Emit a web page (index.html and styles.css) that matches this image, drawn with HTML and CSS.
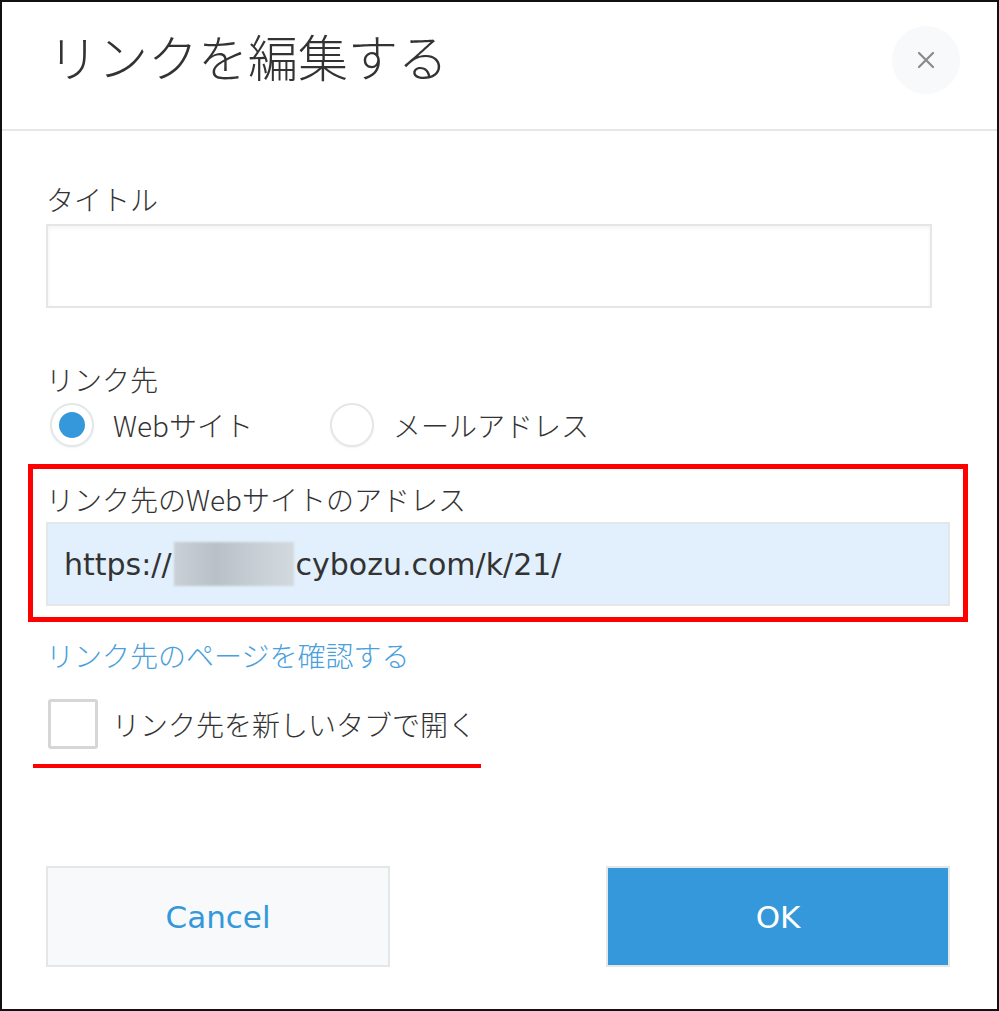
FILE: index.html
```html
<!DOCTYPE html>
<html lang="ja">
<head>
<meta charset="utf-8">
<link rel="stylesheet" href="styles.css">
</head>
<body>
<div class="frame">
  <header class="dialog-header">
    <h1 class="dialog-title">リンクを編集する</h1>
    <button class="close-btn" type="button">
      <svg width="20" height="20" viewBox="0 0 20 20"><path d="M3 3 L17 17 M17 3 L3 17" stroke="#8a8a8a" stroke-width="2.2" stroke-linecap="round"/></svg>
    </button>
  </header>
  <main class="dialog-body">
    <div class="label label-title">タイトル</div>
    <div class="text-input"></div>

    <div class="label label-dest">リンク先</div>
    <div class="radio-row">
      <div class="radio-item radio-item-first"><span class="radio checked"><span class="dot"></span></span><span class="radio-text">Webサイト</span></div>
      <div class="radio-item"><span class="radio"></span><span class="radio-text">メールアドレス</span></div>
    </div>

    <div class="highlight-box">
      <div class="label">リンク先のWebサイトのアドレス</div>
      <div class="url-input"><span>https://</span><span class="blur"></span><span>cybozu.com/k/21/</span></div>
    </div>

    <div class="link">リンク先のページを確認する</div>

    <div class="check-row"><span class="checkbox"></span><span class="check-text">リンク先を新しいタブで開く</span></div>
    <div class="red-underline"></div>

    <div class="buttons">
      <button class="btn btn-cancel" type="button">Cancel</button>
      <button class="btn btn-ok" type="button">OK</button>
    </div>
  </main>
</div>
</body>
</html>
```
FILE: styles.css
```css
* { box-sizing: border-box; }
html, body { margin: 0; padding: 0; background: #fff; }
body {
  font-family: "Noto Sans CJK JP", "Noto Sans", sans-serif;
  font-weight: 300;
  color: #333;
}
.frame {
  width: 999px;
  height: 1011px;
  border: 2px solid #111;
  background: #fff;
  overflow: hidden;
}
.dialog-header {
  box-sizing: content-box;
  height: 117px;
  padding: 2px 37px 8px 46px;
  border-bottom: 2px solid #e3e7e8;
  display: flex;
  align-items: center;
  justify-content: space-between;
}
.dialog-title {
  margin: 0 0 16px 0;
  font-weight: 300;
  font-size: 50px;
  line-height: 1;
  color: #333;
}
.close-btn {
  width: 68px;
  height: 68px;
  border-radius: 50%;
  border: none;
  background: #f7f9fa;
  display: flex;
  align-items: center;
  justify-content: center;
  padding: 0;
  margin-bottom: 6px;
}
.dialog-body {
  padding: 49px 47px 0 44px;
}
.label {
  font-size: 28px;
  line-height: 39px;
  height: 39px;
  color: #333;
}
.text-input {
  margin-top: 5px;
  width: 886px;
  height: 84px;
  border: 2px solid #e3e7e8;
  background: #fff;
  box-shadow: inset 0 2px 4px rgba(0,0,0,0.05);
}
.label-dest { margin-top: 52px; }
.radio-row {
  margin-top: 3px;
  display: flex;
  height: 46px;
  align-items: center;
}
.radio-item {
  display: flex;
  align-items: center;
  gap: 19px;
}
.radio-item-first { width: 280px; margin-left: 4px; }
.radio {
  width: 44px;
  height: 44px;
  border-radius: 50%;
  border: 2px solid #e3e7e8;
  background: #fff;
  display: flex;
  align-items: center;
  justify-content: center;
  box-shadow: 0 1px 2px rgba(0,0,0,0.06);
}
.dot {
  width: 26px;
  height: 26px;
  border-radius: 50%;
  background: #3498db;
}
.radio-text { font-size: 28px; line-height: 1; }
.highlight-box {
  margin-top: 16px;
  margin-left: -18px;
  width: 940px;
  height: 158px;
  border: 5px solid #ff0000;
  padding: 11px 13px 0 13px;
}
.url-input {
  margin-top: 3px;
  width: 904px;
  height: 84px;
  background: #e1f0fc;
  border: 2px solid #e3e7e8;
  display: flex;
  align-items: center;
  padding-left: 16px;
  font-family: "DejaVu Sans", sans-serif;
  font-weight: normal;
  font-size: 30px;
  color: #333;
}
.blur {
  display: inline-block;
  width: 120px;
  height: 44px;
  margin: 0 2px;
  background: linear-gradient(90deg, #c9d0d6 0%, #b9c1c8 35%, #c8d0d6 70%, #d2dade 100%);
  filter: blur(1px);
}
.link {
  margin-top: 14px;
  font-size: 28px;
  line-height: 39px;
  color: #4a9fdc;
}
.check-row {
  margin-top: 24px;
  height: 50px;
  display: flex;
  align-items: center;
  gap: 14px;
  margin-left: 2px;
}
.checkbox {
  width: 50px;
  height: 50px;
  border: 3px solid #d6d6d6;
  border-radius: 3px;
  background: #fff;
}
.check-text { font-size: 28px; line-height: 1; }
.red-underline {
  margin-top: 15px;
  margin-left: -13px;
  width: 448px;
  height: 4px;
  background: #ff0000;
}
.buttons {
  margin-top: 98px;
  display: flex;
  justify-content: space-between;
  width: 904px;
}
.btn {
  width: 344px;
  height: 101px;
  font-family: "DejaVu Sans", sans-serif;
  font-size: 31px;
  border: 2px solid #e3e7e8;
  padding: 0;
}
.btn-cancel { background: #f7f9fa; color: #3498db; }
.btn-ok { background: #3498db; color: #fff; border-color: #e3e7e8; }
```
